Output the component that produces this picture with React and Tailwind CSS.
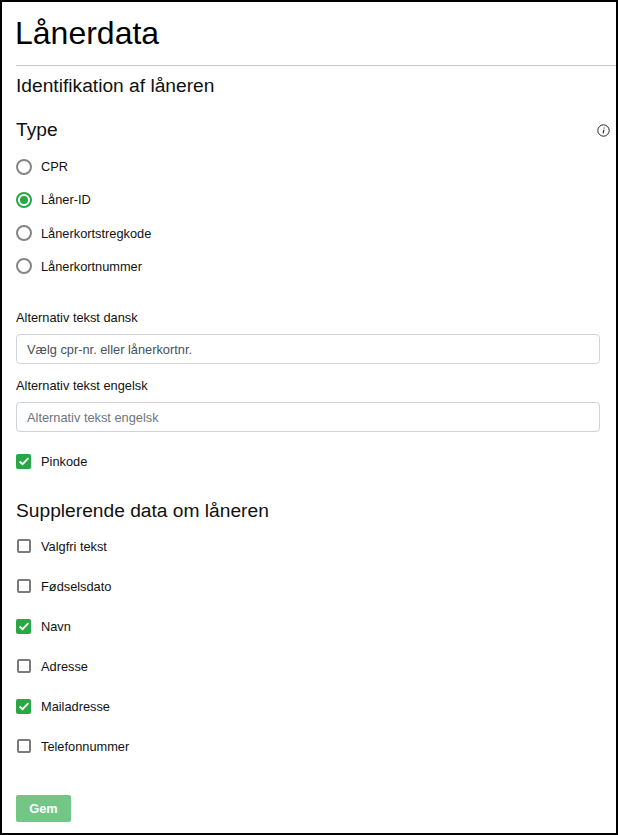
const radios = [["CPR", false], ["Låner-ID", true], ["Lånerkortstregkode", false], ["Lånerkortnummer", false]];
const checks = [["Valgfri tekst", false], ["Fødselsdato", false], ["Navn", true], ["Adresse", false], ["Mailadresse", true], ["Telefonnummer", false]];

function Radio({ on }) {
  return (
    <span className={`flex h-4 w-4 items-center justify-center rounded-full border-2 bg-white ${on ? "border-[#28a745]" : "border-[#858585]"}`}>
      {on && <span className="h-2 w-2 rounded-full bg-[#28a745]" />}
    </span>
  );
}

function Check({ on }) {
  if (on)
    return (
      <span className="flex h-[15px] w-[15px] items-center justify-center rounded-[2px] bg-[#28a745]">
        <svg viewBox="0 0 16 16" className="h-[14px] w-[14px]" fill="none" stroke="#fff" strokeWidth="2.2">
          <path d="M3 8.5l3.4 3.2L13 4.8" />
        </svg>
      </span>
    );
  return (
    <span className="flex h-[15px] w-[15px] items-center justify-center">
      <span className="h-[14px] w-[14px] rounded-[2px] border-2 border-[#7b7b7b] bg-white" />
    </span>
  );
}

function Field({ label, placeholder, dark }) {
  return (
    <div>
      <div className="h-[18px] text-[12.8px] leading-[18px] text-[#111]">{label}</div>
      <div className={`mt-[7px] flex h-[30px] w-[584px] items-center rounded-[4px] border border-[#ced4da] bg-white px-[10px] text-[12.8px] ${dark ? "text-[#495057]" : "text-[#6c757d]"}`}>
        {placeholder}
      </div>
    </div>
  );
}

export default function App() {
  return (
    <div className="h-[835px] w-[618px] border-2 border-black bg-white pl-[14px] font-['Liberation_Sans',Arial,sans-serif] text-[#111]">
      <h1 className="-ml-px pt-[10px] text-[32px] leading-[42px] text-black">Lånerdata</h1>
      <div className="mt-[11px] h-px bg-[#c8c8c8]" />
      <h2 className="mt-[9px] text-[19.2px] leading-[22px]">Identifikation af låneren</h2>
      <div className="mt-[22px] flex items-center justify-between pr-[6px]">
        <h3 className="text-[19.2px] leading-[22px]">Type</h3>
        <svg viewBox="0 0 16 16" className="h-[13px] w-[13px]" fill="none" stroke="#222" strokeWidth="1.2">
          <circle cx="8" cy="8" r="7" />
          <path d="M8.6 6.8L7.5 11.6M8.7 4.2v1.2" strokeWidth="1.4" />
        </svg>
      </div>
      <div className="mt-[17.6px] flex flex-col gap-[17.3px]">
        {radios.map(([t, on]) => (
          <div key={t} className="flex h-4 items-center gap-[9px] text-[12.8px]">
            <Radio on={on} />
            <span>{t}</span>
          </div>
        ))}
      </div>
      <div className="mt-[34.7px] flex flex-col gap-[13px]">
        <Field label="Alternativ tekst dansk" placeholder="Vælg cpr-nr. eller lånerkortnr." dark />
        <Field label="Alternativ tekst engelsk" placeholder="Alternativ tekst engelsk" />
      </div>
      <div className="mt-[21px] flex h-4 items-center gap-[10px] text-[12.8px]">
        <Check on />
        <span>Pinkode</span>
      </div>
      <h2 className="mt-[30px] text-[19.2px] leading-[24px]">Supplerende data om låneren</h2>
      <div className="mt-[15px] flex flex-col gap-[24px]">
        {checks.map(([t, on]) => (
          <div key={t} className="flex h-4 items-center gap-[10px] text-[12.8px]">
            <Check on={on} />
            <span>{t}</span>
          </div>
        ))}
      </div>
      <button className="mt-[41px] block h-[27px] w-[55px] rounded-[2px] bg-[#74c687] text-[12.8px] font-bold text-white">Gem</button>
    </div>
  );
}
